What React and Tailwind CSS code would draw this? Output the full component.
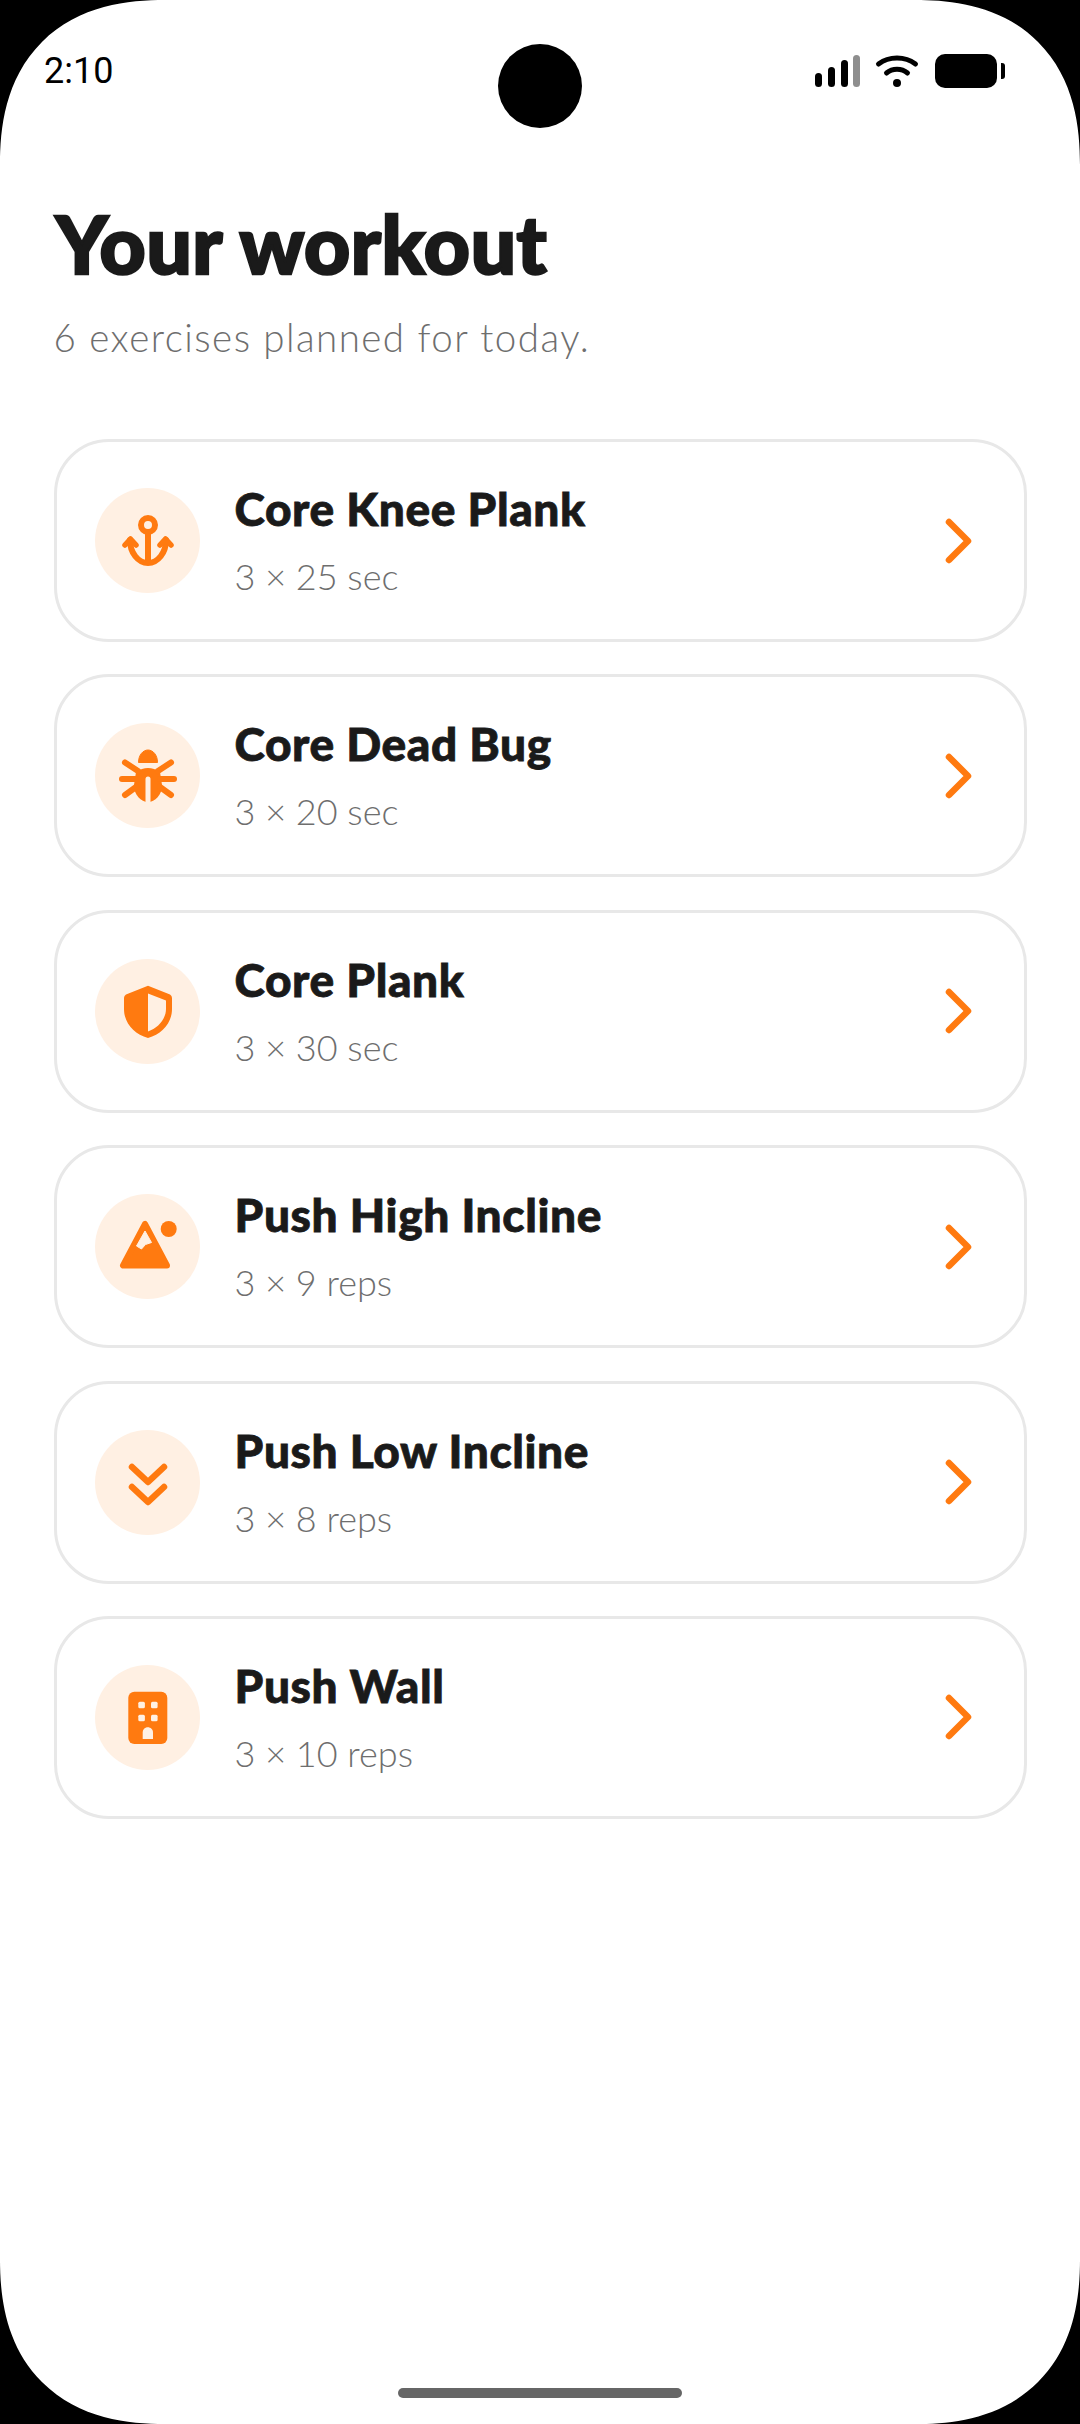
const ORANGE = "#ff7a10";
const TINT = "#fff0e3";

// all icons drawn in the 105px coordinates of their tinted circle
const AnchorIcon = () => (
  <g fill="none" stroke={ORANGE} strokeWidth="6" strokeLinecap="round" strokeLinejoin="round">
    <circle cx="53" cy="37" r="7" />
    <path d="M53 44V75" strokeLinecap="butt" />
    <path d="M35 52A18 23 0 0 0 71 52" />
    <path d="M30 57L35.500 51L41 57" strokeWidth="5.500" />
    <path d="M65 57L70.500 51L76 57" strokeWidth="5.500" />
  </g>
);

const BugIcon = () => (
  <g>
    <path d="M43.5 39.5C43.5 32 48 27 53 27C58 27 62.5 32 62.5 39.5Z" fill={ORANGE} stroke={ORANGE} strokeLinejoin="round" />
    <path d="M41 49Q53 41 65 49L67 62C67 72 60 79 53 79C46 79 39 72 39 62Z" fill={ORANGE} />
    <path d="M53 56V82" stroke={TINT} strokeWidth="5" strokeLinecap="round" />
    <g stroke={ORANGE} strokeWidth="6" strokeLinecap="round">
      <path d="M30 39.5L43 48" />
      <path d="M76 39.5L63 48" />
      <path d="M27 56H41" />
      <path d="M79 56H65" />
      <path d="M30 72L41 64" />
      <path d="M76 72L65 64" />
    </g>
  </g>
);

const ShieldIcon = () => (
  <path
    d="M53 26.7L31 35.5Q29 36.5 29 39V50C29 64 39 75 53 79C67 75 77 64 77 50V39Q77 36.5 75 35.5ZM53 34.5L71 41.5V50C71 60 63 69 53 72.5Z"
    fill={ORANGE}
    fillRule="evenodd"
  />
);

const MountainIcon = () => (
  <g>
    <circle cx="73.7" cy="35" r="8" fill={ORANGE} />
    <path d="M50 30L28 71.5H72Z" fill={ORANGE} stroke={ORANGE} strokeWidth="6" strokeLinejoin="round" />
    <path d="M50 37L41.5 52L46.5 55L50.5 50.5L56.5 48.5Z" fill={TINT} stroke={TINT} strokeLinejoin="round" />
  </g>
);

const ChevronsIcon = () => (
  <g fill="none" stroke={ORANGE} strokeWidth="6.5" strokeLinecap="round" strokeLinejoin="round">
    <path d="M37 37L53 52L69 37" />
    <path d="M37 57L53 72L69 57" />
  </g>
);

const BuildingIcon = () => (
  <g>
    <rect x="33.3" y="26.7" width="39" height="52.3" rx="6" fill={ORANGE} />
    <g fill={TINT}>
      <rect x="43.3" y="36.7" width="6.6" height="6.6" rx="1.5" />
      <rect x="56" y="36.7" width="6.6" height="6.6" rx="1.5" />
      <rect x="43.3" y="49.7" width="6.6" height="6.6" rx="1.5" />
      <rect x="56" y="49.7" width="6.6" height="6.6" rx="1.5" />
      <path d="M47.7 74V67.5C47.7 64.5 50 62.3 52.8 62.3C55.6 62.3 58 64.5 58 67.5V74Z" />
    </g>
  </g>
);

const EXERCISES = [
  { name: "Core Knee Plank", detail: "3 × 25 sec", icon: AnchorIcon },
  { name: "Core Dead Bug", detail: "3 × 20 sec", icon: BugIcon },
  { name: "Core Plank", detail: "3 × 30 sec", icon: ShieldIcon },
  { name: "Push High Incline", detail: "3 × 9 reps", icon: MountainIcon },
  { name: "Push Low Incline", detail: "3 × 8 reps", icon: ChevronsIcon },
  { name: "Push Wall", detail: "3 × 10 reps", icon: BuildingIcon },
];

const StatusIcons = () => (
  <svg width="192" height="36" viewBox="0 0 192 36">
    <g fill="#000">
      <rect x="0" y="19" width="7" height="14" rx="3.5" />
      <rect x="13" y="13" width="7" height="20" rx="3.5" />
      <rect x="26" y="6" width="7" height="27" rx="3.5" />
      <rect x="38" y="1" width="7" height="32" rx="3.5" fill="#8e8e8e" />
      <circle cx="82" cy="29" r="4" />
      <rect x="120" y="0" width="62" height="34" rx="10" />
      <path d="M186 9h1a3 3 0 0 1 3 3v10a3 3 0 0 1-3 3h-1z" />
    </g>
    <g fill="none" stroke="#000" strokeWidth="5" strokeLinecap="round">
      <path d="M63.5 10C74 2 90 2 100.500 10" />
      <path d="M71.500 19C77.500 14 86.500 14 92.500 19" />
    </g>
  </svg>
);

const ExerciseCard = ({ name, detail, icon: Icon }) => (
  <div className="flex h-[203px] items-center rounded-[55px] border-[3px] border-[#e8e8e8] pl-[38.5px] pr-[51px]">
    <div className="h-[105px] w-[105px] shrink-0 rounded-full bg-[#fff0e3]">
      <svg width="105" height="105" viewBox="0 0 105 105">
        <Icon />
      </svg>
    </div>
    <div className="ml-[34.5px] flex-1">
      <div className="font-['Lato'] text-[46px] leading-[58px] font-black tracking-[0.6px] text-[#1a1a1a] [-webkit-text-stroke:0.8px_#1a1a1a]">{name}</div>
      <div className="mt-[13px] font-['Lato'] text-[36px] leading-[50px] font-light text-[#6e6e6e]">{detail}</div>
    </div>
    <svg width="30" height="50" viewBox="0 0 30 50">
      <path d="M6 6L25 25L6 44" fill="none" stroke={ORANGE} strokeWidth="6.500" strokeLinecap="round" strokeLinejoin="round" />
    </svg>
  </div>
);

export default function App() {
  return (
    <div className="h-[2424px] w-[1080px] overflow-hidden bg-black">
      <div className="relative h-full w-full rounded-[165px] bg-white [corner-shape:superellipse(1.24)]">
        {/* camera */}
        <div className="absolute left-[498px] top-[44px] h-[84px] w-[84px] rounded-full bg-black" />

        <div className="flex h-[160px] items-start justify-between pl-[44px] pr-[73.5px] pt-[49px]">
          <span className="font-['Roboto'] text-[36px] leading-[44px] text-black">2:10</span>
          <div className="pt-[5px]">
            <StatusIcons />
          </div>
        </div>

        <div className="px-[53.5px]">
          <h1 className="mt-[33px] pl-[2px] font-['Lato'] text-[80px] leading-[100px] font-black tracking-[0.6px] text-[#1a1a1a] [-webkit-text-stroke:2.5px_#1a1a1a]">Your workout</h1>
          <p className="mt-[17px] font-['Lato'] text-[38.5px] leading-[54px] font-light tracking-[1.45px] text-[#6e6e6e]">
            6 exercises planned for today.
          </p>
          <div className="mt-[75px] flex flex-col gap-[32.4px]">
            {EXERCISES.map((exercise) => (
              <ExerciseCard key={exercise.name} {...exercise} />
            ))}
          </div>
        </div>

        {/* home indicator */}
        <div className="absolute bottom-[26px] left-[398px] h-[10px] w-[284px] rounded-full bg-[#666666]" />
      </div>
    </div>
  );
}
